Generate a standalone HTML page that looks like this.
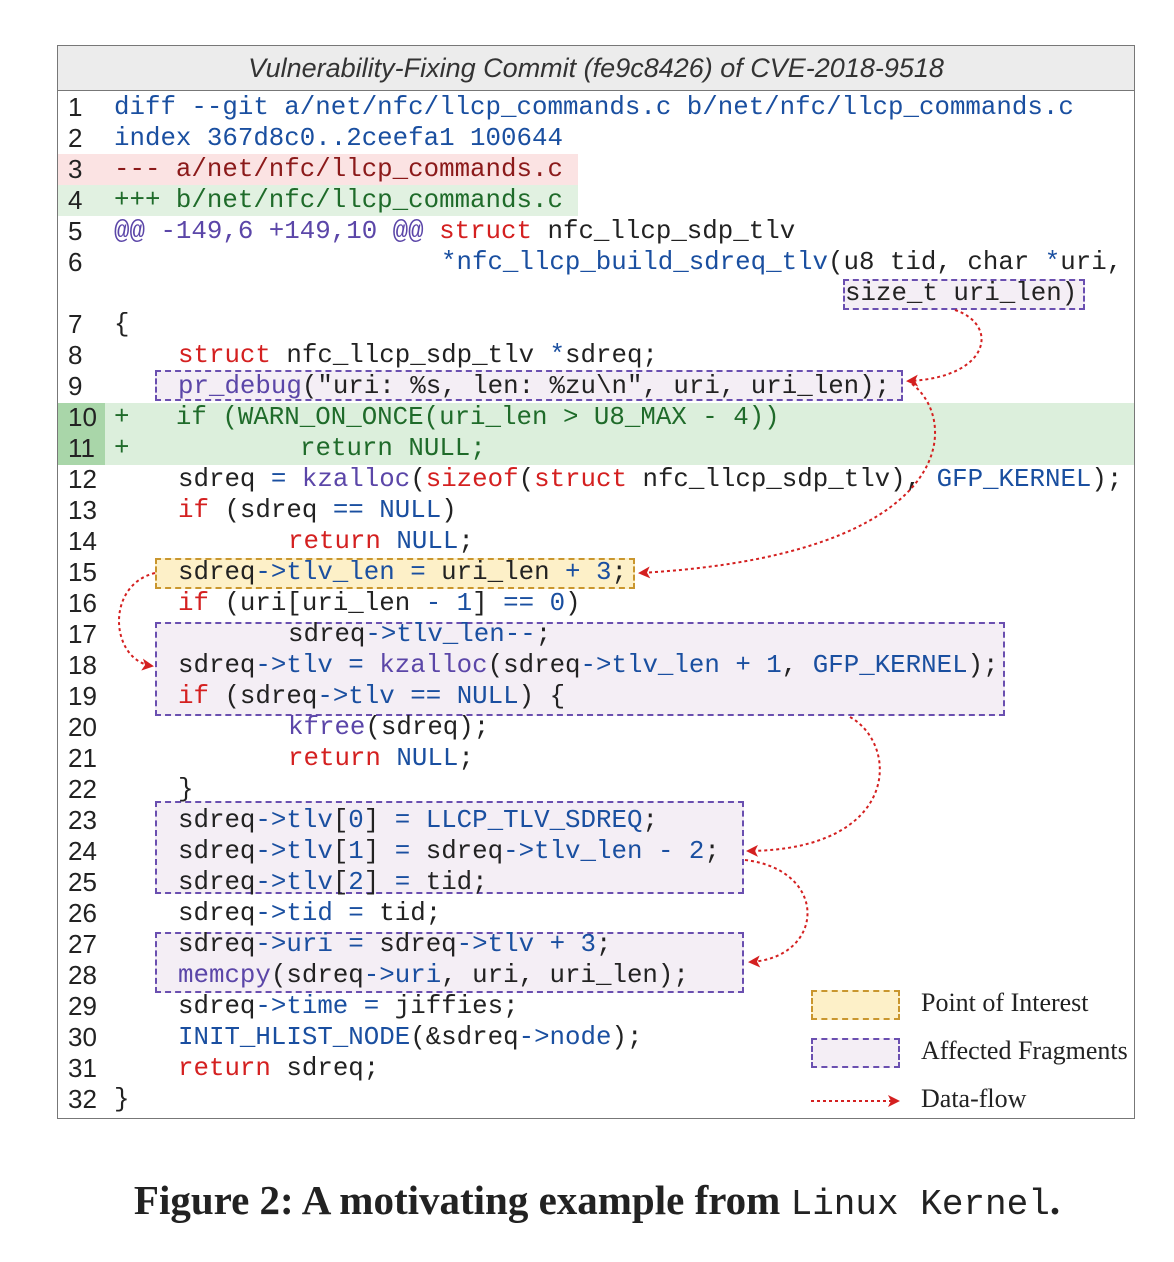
<!DOCTYPE html>
<html><head><meta charset="utf-8"><style>
body{margin:0;background:#fff;width:1174px;height:1262px;position:relative;overflow:hidden;font-family:"Liberation Mono",monospace}
.frame{position:absolute;left:57px;top:45px;width:1078px;height:1074px;border:1.5px solid #777;box-sizing:border-box}
.hdr{position:absolute;left:58px;top:46px;width:1076px;height:44px;background:#ececec;border-bottom:1.5px solid #777;font:italic 27px "Liberation Sans",sans-serif;color:#333;text-align:center;line-height:44px}
.n{position:absolute;left:68px;font:26px "Liberation Sans",sans-serif;color:#222;line-height:31px}
.c{position:absolute;font-size:25.8px;line-height:31px;white-space:pre;color:#222}
.b{color:#1a4fa0}.r{color:#d42020}.p{color:#5b46a8}.dr{color:#8b1a1a}.g{color:#1f6b2a}
.bg{position:absolute}
.box{position:absolute;box-sizing:border-box}
.aff{background:#f4eef5;border:2px dashed #6a4fb0}
.poi{background:#fdf0c8;border:2px dashed #c9962e}
.leg{position:absolute;left:921px;font:26px "Liberation Serif",serif;color:#222}
</style></head><body>
<div class="bg" style="left:58px;top:154px;width:520px;height:31px;background:#fbe3e3"></div>
<div class="bg" style="left:58px;top:185px;width:520px;height:31px;background:#e1f1e1"></div>
<div class="bg" style="left:58px;top:403px;width:1077px;height:62px;background:#dcefdc"></div>
<div class="bg" style="left:58px;top:403px;width:47px;height:62px;background:#a9d6a9"></div>
<div class="box aff" style="left:843px;top:279px;width:242px;height:31px"></div>
<div class="box aff" style="left:155px;top:370px;width:748px;height:31px"></div>
<div class="box poi" style="left:155px;top:558px;width:480px;height:31px"></div>
<div class="box aff" style="left:155px;top:622px;width:850px;height:94px"></div>
<div class="box aff" style="left:155px;top:801px;width:589px;height:93px"></div>
<div class="box aff" style="left:155px;top:932px;width:589px;height:61px"></div>
<div class="box poi" style="left:811px;top:990px;width:89px;height:30px"></div>
<div class="box aff" style="left:811px;top:1038px;width:89px;height:30px"></div>
<div class="frame"></div>
<div class="hdr">Vulnerability-Fixing Commit (fe9c8426) of CVE-2018-9518</div>

<div class="n" style="top:92px">1</div><div class="c b" style="left:114px;top:92px">diff --git a/net/nfc/llcp_commands.c b/net/nfc/llcp_commands.c</div>
<div class="n" style="top:123px">2</div><div class="c b" style="left:114px;top:123px">index 367d8c0..2ceefa1 100644</div>
<div class="n" style="top:154px">3</div><div class="c dr" style="left:114px;top:154px">--- a/net/nfc/llcp_commands.c</div>
<div class="n" style="top:185px">4</div><div class="c g" style="left:114px;top:185px">+++ b/net/nfc/llcp_commands.c</div>
<div class="n" style="top:216px">5</div><div class="c" style="left:114px;top:216px"><span class="p">@@ -149,6 +149,10 @@</span> <span class="r">struct</span> nfc_llcp_sdp_tlv</div>
<div class="n" style="top:247px">6</div><div class="c" style="left:441px;top:247px"><span class="b">*nfc_llcp_build_sdreq_tlv</span>(u8 tid, char <span class="b">*</span>uri,</div>
<div class="c" style="left:845px;top:278px">size_t uri_len)</div>
<div class="n" style="top:309px">7</div><div class="c" style="left:114px;top:309px">{</div>
<div class="n" style="top:340px">8</div><div class="c" style="left:178px;top:340px"><span class="r">struct</span> nfc_llcp_sdp_tlv <span class="b">*</span>sdreq;</div>
<div class="n" style="top:371px">9</div><div class="c" style="left:178px;top:371px"><span class="p">pr_debug</span>("uri: %s, len: %zu\n", uri, uri_len);</div>
<div class="n" style="top:402px">10</div><div class="c g" style="left:114px;top:402px">+   if (WARN_ON_ONCE(uri_len &gt; U8_MAX - 4))</div>
<div class="n" style="top:433px">11</div><div class="c g" style="left:114px;top:433px">+</div><div class="c g" style="left:300px;top:433px">return NULL;</div>
<div class="n" style="top:464px">12</div><div class="c" style="left:178px;top:464px">sdreq <span class="b">=</span> <span class="p">kzalloc</span>(<span class="r">sizeof</span>(<span class="r">struct</span> nfc_llcp_sdp_tlv), <span class="b">GFP_KERNEL</span>);</div>
<div class="n" style="top:495px">13</div><div class="c" style="left:178px;top:495px"><span class="r">if</span> (sdreq <span class="b">==</span> <span class="b">NULL</span>)</div>
<div class="n" style="top:526px">14</div><div class="c" style="left:288px;top:526px"><span class="r">return</span> <span class="b">NULL</span>;</div>
<div class="n" style="top:557px">15</div><div class="c" style="left:178px;top:557px">sdreq<span class="b">-&gt;tlv_len</span> <span class="b">=</span> uri_len <span class="b">+ 3</span>;</div>
<div class="n" style="top:588px">16</div><div class="c" style="left:178px;top:588px"><span class="r">if</span> (uri[uri_len <span class="b">- 1</span>] <span class="b">==</span> <span class="b">0</span>)</div>
<div class="n" style="top:619px">17</div><div class="c" style="left:288px;top:619px">sdreq<span class="b">-&gt;tlv_len--</span>;</div>
<div class="n" style="top:650px">18</div><div class="c" style="left:178px;top:650px">sdreq<span class="b">-&gt;tlv</span> <span class="b">=</span> <span class="p">kzalloc</span>(sdreq<span class="b">-&gt;tlv_len</span> <span class="b">+ 1</span>, <span class="b">GFP_KERNEL</span>);</div>
<div class="n" style="top:681px">19</div><div class="c" style="left:178px;top:681px"><span class="r">if</span> (sdreq<span class="b">-&gt;tlv</span> <span class="b">==</span> <span class="b">NULL</span>) {</div>
<div class="n" style="top:712px">20</div><div class="c" style="left:288px;top:712px"><span class="p">kfree</span>(sdreq);</div>
<div class="n" style="top:743px">21</div><div class="c" style="left:288px;top:743px"><span class="r">return</span> <span class="b">NULL</span>;</div>
<div class="n" style="top:774px">22</div><div class="c" style="left:178px;top:774px">}</div>
<div class="n" style="top:805px">23</div><div class="c" style="left:178px;top:805px">sdreq<span class="b">-&gt;tlv</span>[<span class="b">0</span>] <span class="b">=</span> <span class="b">LLCP_TLV_SDREQ</span>;</div>
<div class="n" style="top:836px">24</div><div class="c" style="left:178px;top:836px">sdreq<span class="b">-&gt;tlv</span>[<span class="b">1</span>] <span class="b">=</span> sdreq<span class="b">-&gt;tlv_len</span> <span class="b">- 2</span>;</div>
<div class="n" style="top:867px">25</div><div class="c" style="left:178px;top:867px">sdreq<span class="b">-&gt;tlv</span>[<span class="b">2</span>] <span class="b">=</span> tid;</div>
<div class="n" style="top:898px">26</div><div class="c" style="left:178px;top:898px">sdreq<span class="b">-&gt;tid</span> <span class="b">=</span> tid;</div>
<div class="n" style="top:929px">27</div><div class="c" style="left:178px;top:929px">sdreq<span class="b">-&gt;uri</span> <span class="b">=</span> sdreq<span class="b">-&gt;tlv</span> <span class="b">+ 3</span>;</div>
<div class="n" style="top:960px">28</div><div class="c" style="left:178px;top:960px"><span class="p">memcpy</span>(sdreq<span class="b">-&gt;uri</span>, uri, uri_len);</div>
<div class="n" style="top:991px">29</div><div class="c" style="left:178px;top:991px">sdreq<span class="b">-&gt;time</span> <span class="b">=</span> jiffies;</div>
<div class="n" style="top:1022px">30</div><div class="c" style="left:178px;top:1022px"><span class="b">INIT_HLIST_NODE</span>(&amp;sdreq<span class="b">-&gt;node</span>);</div>
<div class="n" style="top:1053px">31</div><div class="c" style="left:178px;top:1053px"><span class="r">return</span> sdreq;</div>
<div class="n" style="top:1084px">32</div><div class="c" style="left:114px;top:1084px">}</div>

<svg style="position:absolute;left:0;top:0" width="1174" height="1262">
<defs><marker id="a" markerWidth="12" markerHeight="12" refX="10" refY="6" orient="auto" markerUnits="userSpaceOnUse"><path d="M0,0 L12,6 L0,12 L3,6z" fill="#d42020"/></marker></defs>
<g fill="none" stroke="#d42020" stroke-width="2" stroke-dasharray="3,3" marker-end="url(#a)">
<path d="M955,310 C1000,325 990,378 908,381"/>
<path d="M912,384 C960,420 960,555 640,573"/>
<path d="M155,573 C105,585 110,660 152,666"/>
<path d="M850,717 C900,745 900,850 748,851"/>
<path d="M745,860 C830,870 825,958 750,962"/>
<path d="M811,1101 L898,1101"/>
</g></svg>
<div class="leg" style="top:988px">Point of Interest</div>
<div class="leg" style="top:1036px">Affected Fragments</div>
<div class="leg" style="top:1084px">Data-flow</div>
<div style="position:absolute;left:0;width:1194px;top:1176px;text-align:center;font:bold 41px 'Liberation Serif',serif;color:#222;white-space:nowrap">Figure 2: A motivating example from <span style="font:36px 'Liberation Mono',monospace">Linux Kernel</span>.</div>
</body></html>
